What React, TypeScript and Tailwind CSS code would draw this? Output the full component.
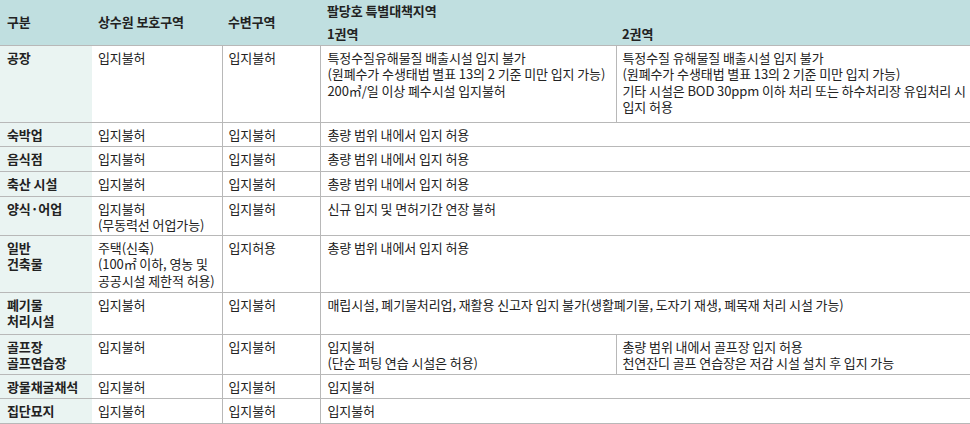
const font = "font-['Noto_Sans_CJK_KR','Noto_Sans',sans-serif]";

type Row = {
  label: string[];
  water: string[];
  shore: string[];
  zone1: string[];
  zone2?: string[];
  h: string;
};

const rows: Row[] = [
  {
    label: ["공장"],
    water: ["입지불허"],
    shore: ["입지불허"],
    zone1: ["특정수질유해물질 배출시설 입지 불가", "(원폐수가 수생태법 별표 13의 2 기준 미만 입지 가능)", "200㎥/일 이상 폐수시설 입지불허"],
    zone2: ["특정수질 유해물질 배출시설 입지 불가", "(원폐수가 수생태법 별표 13의 2 기준 미만 입지 가능)", "기타 시설은 BOD 30ppm 이하 처리 또는 하수처리장 유입처리 시", "입지 허용"],
    h: "h-[77px]",
  },
  { label: ["숙박업"], water: ["입지불허"], shore: ["입지불허"], zone1: ["총량 범위 내에서 입지 허용"], h: "h-[24px]" },
  { label: ["음식점"], water: ["입지불허"], shore: ["입지불허"], zone1: ["총량 범위 내에서 입지 허용"], h: "h-[25px]" },
  { label: ["축산 시설"], water: ["입지불허"], shore: ["입지불허"], zone1: ["총량 범위 내에서 입지 허용"], h: "h-[25px]" },
  { label: ["양식·어업"], water: ["입지불허", "(무동력선 어업가능)"], shore: ["입지불허"], zone1: ["신규 입지 및 면허기간 연장 불허"], h: "h-[39px]" },
  { label: ["일반", "건축물"], water: ["주택(신축)", "(100㎡ 이하, 영농 및", "공공시설 제한적 허용)"], shore: ["입지허용"], zone1: ["총량 범위 내에서 입지 허용"], h: "h-[57px]" },
  { label: ["폐기물", "처리시설"], water: ["입지불허"], shore: ["입지불허"], zone1: ["매립시설, 폐기물처리업, 재활용 신고자 입지 불가(생활폐기물, 도자기 재생, 폐목재 처리 시설 가능)"], h: "h-[42px]" },
  { label: ["골프장", "골프연습장"], water: ["입지불허"], shore: ["입지불허"], zone1: ["입지불허", "(단순 퍼팅 연습 시설은 허용)"], zone2: ["총량 범위 내에서 골프장 입지 허용", "천연잔디 골프 연습장은 저감 시설 설치 후 입지 가능"], h: "h-[40px]" },
  { label: ["광물채굴채석"], water: ["입지불허"], shore: ["입지불허"], zone1: ["입지불허"], h: "h-[24px]" },
  { label: ["집단묘지"], water: ["입지불허"], shore: ["입지불허"], zone1: ["입지불허"], h: "h-[25px]" },
];

function Lines({ lines }: { lines: string[] }) {
  return (
    <>
      {lines.map((l, i) => (
        <div key={i} className="whitespace-nowrap">{l}</div>
      ))}
    </>
  );
}

export default function App() {
  return (
    <div className={`w-[970px] h-[424px] bg-white overflow-hidden text-[13px] leading-[16.5px] tracking-[-0.1px] text-[#222] ${font}`}>
      <table className="w-[970px] border-collapse table-fixed">
        <colgroup>
          <col className="w-[92px]" />
          <col className="w-[130px]" />
          <col className="w-[98px]" />
          <col className="w-[296px]" />
          <col className="w-[354px]" />
        </colgroup>
        <thead className="bg-[#c0dfe0]">
          <tr className="h-[23px]">
            <th rowSpan={2} className="text-left font-semibold pl-[7px] align-middle">구분</th>
            <th rowSpan={2} className="text-left font-semibold pl-[6px] align-middle">상수원 보호구역</th>
            <th rowSpan={2} className="text-left font-semibold pl-[6px] align-middle">수변구역</th>
            <th colSpan={2} className="text-left font-semibold pl-[7px] align-middle">팔당호 특별대책지역</th>
          </tr>
          <tr className="h-[22px]">
            <th className="text-left font-semibold pl-[7px] align-middle">1권역</th>
            <th className="text-left font-semibold pl-[6px] align-middle">2권역</th>
          </tr>
        </thead>
        <tbody>
          {rows.map((r, i) => (
            <tr key={i} className={`${r.h} border-t border-b border-[#b8b8b8]`}>
              <td className="bg-[#eaf4f2] align-top pl-[7px] pt-[4px] font-semibold">
                <Lines lines={r.label} />
              </td>
              <td className="align-top pl-[6px] pt-[4px] border-r border-[#b8b8b8]">
                <Lines lines={r.water} />
              </td>
              <td className="align-top pl-[6px] pt-[4px] border-r border-[#b8b8b8]">
                <Lines lines={r.shore} />
              </td>
              {r.zone2 ? (
                <>
                  <td className="align-top pl-[7px] pt-[4px] border-r border-[#b8b8b8]">
                    <Lines lines={r.zone1} />
                  </td>
                  <td className="align-top pl-[6px] pt-[4px]">
                    <Lines lines={r.zone2} />
                  </td>
                </>
              ) : (
                <td colSpan={2} className="align-top pl-[7px] pt-[4px]">
                  <Lines lines={r.zone1} />
                </td>
              )}
            </tr>
          ))}
        </tbody>
      </table>
    </div>
  );
}
